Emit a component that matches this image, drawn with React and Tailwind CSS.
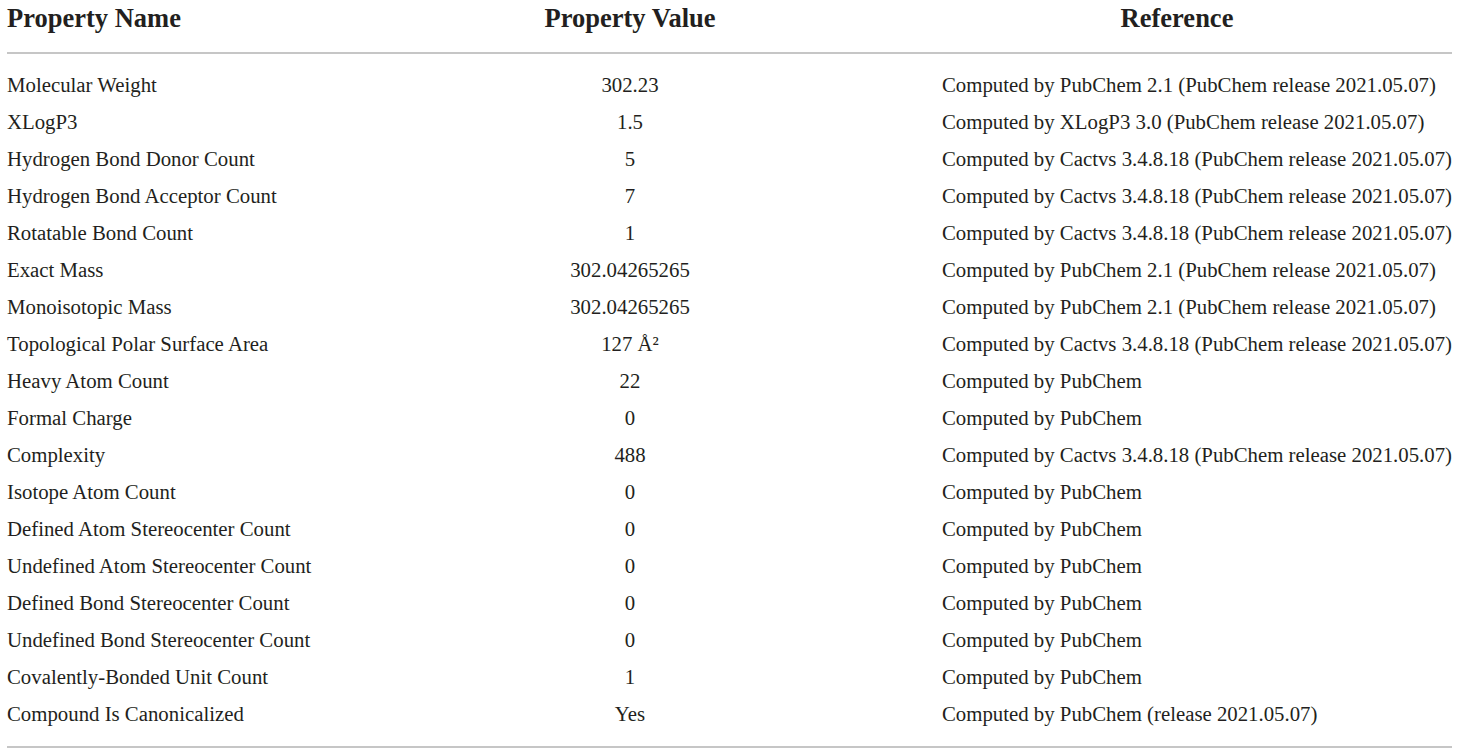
import React from 'react';

const rows = [
  ['Molecular Weight', '302.23', 'Computed by PubChem 2.1 (PubChem release 2021.05.07)'],
  ['XLogP3', '1.5', 'Computed by XLogP3 3.0 (PubChem release 2021.05.07)'],
  ['Hydrogen Bond Donor Count', '5', 'Computed by Cactvs 3.4.8.18 (PubChem release 2021.05.07)'],
  ['Hydrogen Bond Acceptor Count', '7', 'Computed by Cactvs 3.4.8.18 (PubChem release 2021.05.07)'],
  ['Rotatable Bond Count', '1', 'Computed by Cactvs 3.4.8.18 (PubChem release 2021.05.07)'],
  ['Exact Mass', '302.04265265', 'Computed by PubChem 2.1 (PubChem release 2021.05.07)'],
  ['Monoisotopic Mass', '302.04265265', 'Computed by PubChem 2.1 (PubChem release 2021.05.07)'],
  ['Topological Polar Surface Area', '127 Å²', 'Computed by Cactvs 3.4.8.18 (PubChem release 2021.05.07)'],
  ['Heavy Atom Count', '22', 'Computed by PubChem'],
  ['Formal Charge', '0', 'Computed by PubChem'],
  ['Complexity', '488', 'Computed by Cactvs 3.4.8.18 (PubChem release 2021.05.07)'],
  ['Isotope Atom Count', '0', 'Computed by PubChem'],
  ['Defined Atom Stereocenter Count', '0', 'Computed by PubChem'],
  ['Undefined Atom Stereocenter Count', '0', 'Computed by PubChem'],
  ['Defined Bond Stereocenter Count', '0', 'Computed by PubChem'],
  ['Undefined Bond Stereocenter Count', '0', 'Computed by PubChem'],
  ['Covalently-Bonded Unit Count', '1', 'Computed by PubChem'],
  ['Compound Is Canonicalized', 'Yes', 'Computed by PubChem (release 2021.05.07)'],
];

export default function App() {
  return (
    <div className="min-h-[756px] bg-white text-[#231f20] font-['Liberation_Serif',serif]">
      <div className="ml-[7px] w-[1445px]">
        <div className="grid grid-cols-[311px_624px_1fr] h-[54px] pt-[3px] border-b-2 border-[#c6c6c6] text-[26.5px] font-bold leading-[30px]">
          <div>Property Name</div>
          <div className="text-center">Property Value</div>
          <div className="text-center pr-[40px]">Reference</div>
        </div>
        <div className="pt-[12px] pb-[14px] border-b-2 border-[#c6c6c6] text-[20.8px]">
          {rows.map(([name, value, ref]) => (
            <div key={name} className="grid grid-cols-[311px_624px_1fr] h-[37px] items-center">
              <div>{name}</div>
              <div className="text-center">{value}</div>
              <div className="whitespace-nowrap">{ref}</div>
            </div>
          ))}
        </div>
      </div>
    </div>
  );
}
